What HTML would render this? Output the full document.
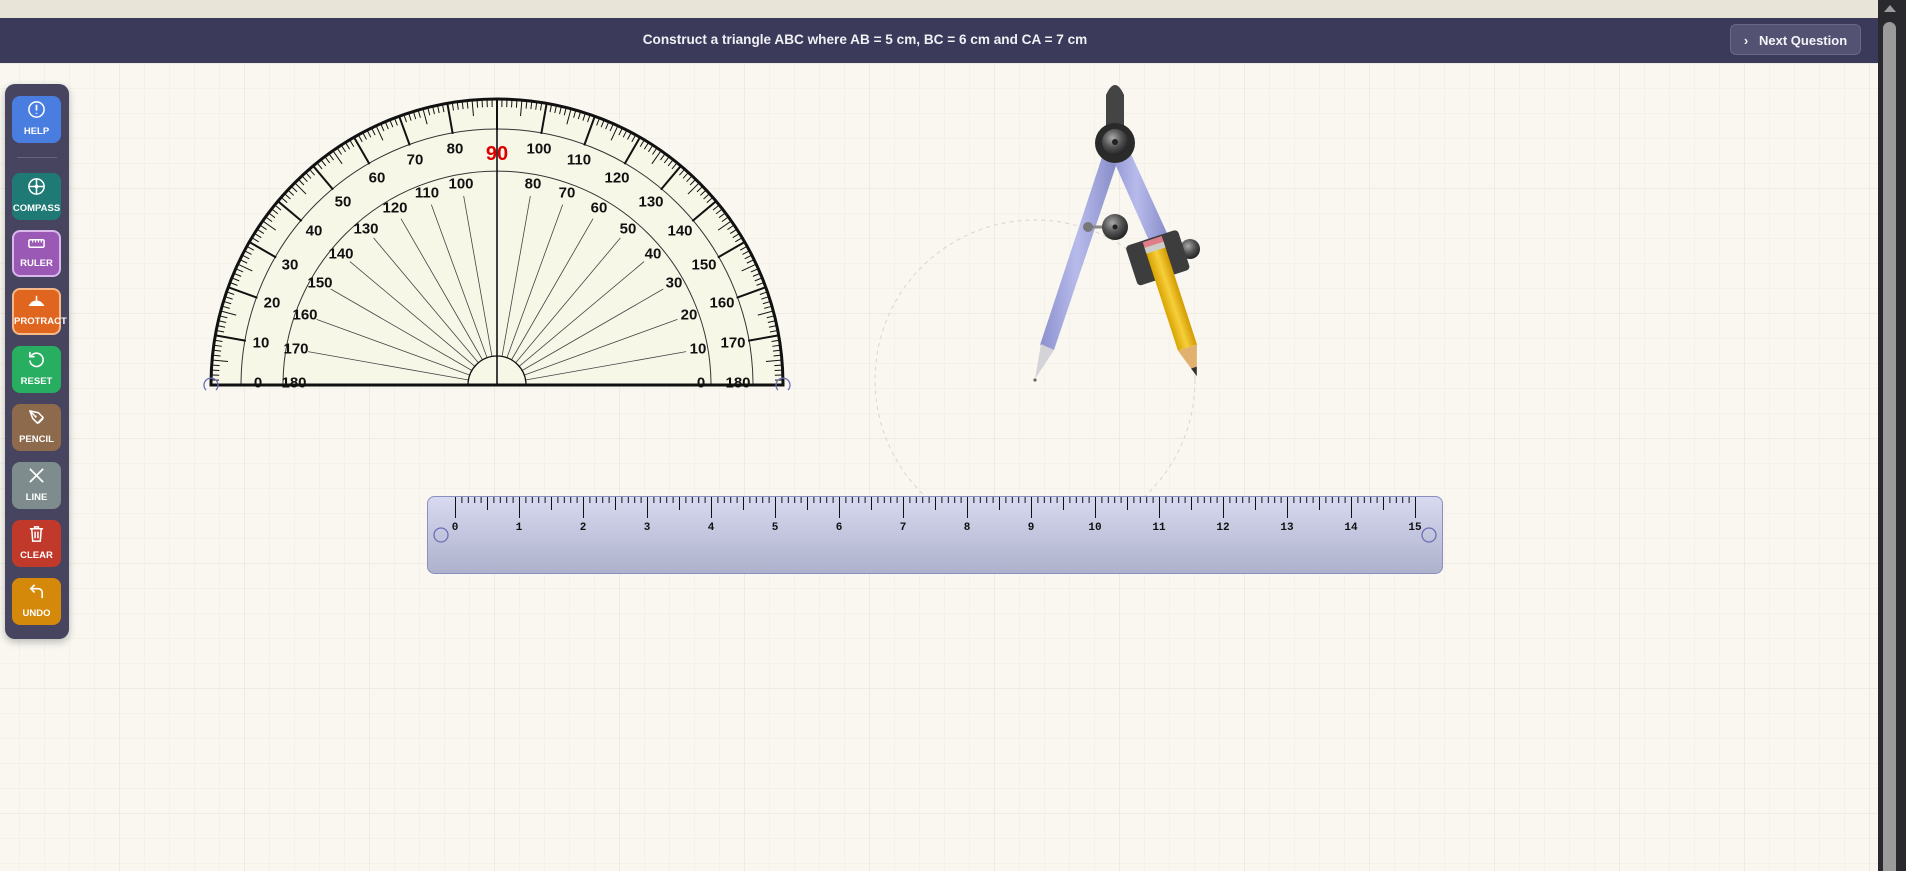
<!DOCTYPE html>
<html><head><meta charset="utf-8">
<style>
html,body{margin:0;padding:0;width:1906px;height:871px;overflow:hidden;font-family:"Liberation Sans",sans-serif;}
body{position:relative;background-color:#f9f7f0;
background-image:linear-gradient(#eeebe2 1px,transparent 1px),linear-gradient(90deg,#eeebe2 1px,transparent 1px),linear-gradient(#f3f1e9 1px,transparent 1px),linear-gradient(90deg,#f3f1e9 1px,transparent 1px);
background-size:125px 125px,125px 125px,25px 25px,25px 25px;background-position:-6px 63px,-6px 63px,-6px 63px,-6px 63px;}
.top{position:absolute;left:0;top:0;width:1878px;height:18px;background:#e8e4d8}
.hdr{position:absolute;left:0;top:18px;width:1878px;height:45px;background:#3b3a5a;color:#f0f0f5;font-weight:bold;font-size:13.6px;}
.hdr .t{position:absolute;left:0;width:1730px;text-align:center;top:14px;padding-left:0}
.btnq{position:absolute;left:1730px;top:6px;width:131px;height:31px;border:1px solid #6a6888;border-radius:6px;background:#545272;color:#f4f4f8;font-size:13px;line-height:31px;text-align:center;box-sizing:border-box}
.sb{position:absolute;left:1878px;top:0;width:28px;height:871px;background:#2a2a2e}
.sb .th{position:absolute;left:5px;top:22px;width:13px;height:860px;background:#9b9b9b;border-radius:7px}
.sb .ar{position:absolute;left:6px;top:5px;width:0;height:0;border-left:6px solid transparent;border-right:6px solid transparent;border-bottom:7px solid #9b9b9b}
.tb{position:absolute;left:5px;top:84px;width:64px;height:555px;background:#46445f;border-radius:10px;box-shadow:0 3px 8px rgba(0,0,0,.25)}
.b{position:absolute;left:7px;width:49px;height:47px;border-radius:8px;color:#fff;font-size:9.5px;font-weight:bold;text-align:center;box-sizing:border-box}
.b span{position:absolute;left:0;right:0;bottom:6px}
.b svg{position:absolute;left:15px;top:4px}
.div{position:absolute;left:12px;top:73px;width:40px;height:1px;background:#66647e}
</style></head><body>
<div class="top"></div>
<div class="hdr"><div class="t">Construct a triangle ABC where AB = 5 cm, BC = 6 cm and CA = 7 cm</div>
<div class="btnq">›&nbsp;&nbsp; Next Question</div></div>
<div class="sb"><div class="ar"></div><div class="th"></div></div>

<div class="tb">
 <div class="b" style="top:12px;background:#4a7de0"><svg width="19" height="19" viewBox="0 0 20 20"><circle cx="10" cy="10" r="8" fill="none" stroke="#fff" stroke-width="1.6"/><path d="M10 5v6M10 13.5v1" stroke="#fff" stroke-width="1.8"/></svg><span>HELP</span></div>
 <div class="div"></div>
 <div class="b" style="top:89px;background:#1f7a76"><svg width="19" height="19" viewBox="0 0 20 20"><circle cx="10" cy="10" r="8" fill="none" stroke="#fff" stroke-width="1.6"/><path d="M10 2v16M2 10h16" stroke="#fff" stroke-width="1.6"/><circle cx="10" cy="10" r="2" fill="#fff"/></svg><span>COMPASS</span></div>
 <div class="b" style="top:146px;background:#9b59b6;border:2px solid #d9b7ea"><svg width="19" height="19" viewBox="0 0 20 20" style="left:13px;top:2px"><rect x="2" y="6" width="16" height="8" rx="1.5" fill="none" stroke="#fff" stroke-width="1.6"/><path d="M6 6v3M9 6v3M12 6v3M15 6v3" stroke="#fff" stroke-width="1.2"/></svg><span>RULER</span></div>
 <div class="b" style="top:204px;background:#e0651e;border:2px solid #f5b889"><svg width="19" height="19" viewBox="0 0 20 20" style="left:13px;top:2px"><path d="M3 14a7 5 0 0 1 14 0z" fill="#fff"/><path d="M10 4v8M2 14h16" stroke="#fff" stroke-width="1.6"/></svg><span>PROTRACT</span></div>
 <div class="b" style="top:262px;background:#27ae60"><svg width="19" height="19" viewBox="0 0 20 20"><path d="M4.5 6A7 7 0 1 1 3 11" fill="none" stroke="#fff" stroke-width="1.7"/><path d="M3 2v5h5" fill="none" stroke="#fff" stroke-width="1.7"/></svg><span>RESET</span></div>
 <div class="b" style="top:320px;background:#8e6a4c"><svg width="19" height="19" viewBox="0 0 20 20"><path d="M3 3l9 2 5 5-6 6-5-5zM3 3l5 5M12 16l5-5" fill="none" stroke="#fff" stroke-width="1.6" stroke-linejoin="round"/><circle cx="9" cy="9" r="1.3" fill="#fff"/></svg><span>PENCIL</span></div>
 <div class="b" style="top:378px;background:#7f8c8d"><svg width="19" height="19" viewBox="0 0 20 20"><path d="M3 3l14 14M17 3L3 17" stroke="#fff" stroke-width="1.8"/></svg><span>LINE</span></div>
 <div class="b" style="top:436px;background:#c0392b"><svg width="19" height="19" viewBox="0 0 20 20"><path d="M3 5h14M8 5V3h4v2M5 5l1 13h8l1-13M8.5 8v7M11.5 8v7" fill="none" stroke="#fff" stroke-width="1.6"/></svg><span>CLEAR</span></div>
 <div class="b" style="top:494px;background:#d4890b"><svg width="19" height="19" viewBox="0 0 20 20"><path d="M8 3L4 7l4 4M4 7h8a4 4 0 0 1 4 4v6" fill="none" stroke="#fff" stroke-width="1.7"/></svg><span>UNDO</span></div>
</div>

<svg width="1906" height="871" style="position:absolute;left:0;top:0" font-family="Liberation Sans,sans-serif">
 <g transform="translate(497,385)">
  <path d="M-286 0A286 286 0 0 1 286 0Z" fill="#f7f7e8" stroke="#111" stroke-width="3"/>
  <path d="M-256 0A256 256 0 0 1 256 0" fill="none" stroke="#333" stroke-width="1"/>
  <path d="M-214 0A214 214 0 0 1 214 0" fill="none" stroke="#333" stroke-width="1"/>
  <g id="pticks" stroke="#111"></g>
  <g id="prays" stroke="#444" stroke-width="0.8"></g>
  <path d="M-29 0A29 29 0 0 1 29 0" fill="#f7f7e8" stroke="#111" stroke-width="1.3"/>
  <line x1="0" y1="0" x2="0" y2="-286" stroke="#111" stroke-width="1.6"/>
  <line x1="-286" y1="0" x2="286" y2="0" stroke="#111" stroke-width="3"/>
  <g font-size="15" font-weight="bold" fill="#111" text-anchor="middle" dominant-baseline="central">
   <text x="-239" y="-2">0</text><text x="-236" y="-42">10</text><text x="-225" y="-82">20</text><text x="-207" y="-120">30</text><text x="-183" y="-154">40</text><text x="-154" y="-183">50</text><text x="-120" y="-207">60</text><text x="-82" y="-225">70</text><text x="-42" y="-236">80</text>
   <text x="42" y="-236">100</text><text x="82" y="-225">110</text><text x="120" y="-207">120</text><text x="154" y="-183">130</text><text x="183" y="-154">140</text><text x="207" y="-120">150</text><text x="225" y="-82">160</text><text x="236" y="-42">170</text><text x="204" y="-2">0</text><text x="241" y="-2">180</text>
   <text x="-203" y="-2">180</text><text x="-201" y="-36">170</text><text x="-192" y="-70">160</text><text x="-177" y="-102">150</text><text x="-156" y="-131">140</text><text x="-131" y="-156">130</text><text x="-102" y="-177">120</text><text x="-70" y="-192">110</text><text x="-36" y="-201">100</text>
   <text x="36" y="-201">80</text><text x="70" y="-192">70</text><text x="102" y="-177">60</text><text x="131" y="-156">50</text><text x="156" y="-131">40</text><text x="177" y="-102">30</text><text x="192" y="-70">20</text><text x="201" y="-36">10</text>
   <text x="0" y="-231" fill="#d00" font-size="20">90</text>
  </g>
  <g fill="none" stroke="#6b6fb5" stroke-width="1.3"><path d="M-291 5a7 7 0 1 1 10 0"/><path d="M281 5a7 7 0 1 1 10 0"/></g>
 </g>
 <circle cx="1035" cy="380" r="160" fill="none" stroke="#d8d6d0" stroke-width="1" stroke-dasharray="4 4"/>
 <defs>
  <linearGradient id="rg" x1="0" y1="0" x2="0" y2="1"><stop offset="0" stop-color="#d7daf0"/><stop offset="1" stop-color="#aeb1cb"/></linearGradient>
  <linearGradient id="leg" x1="0" y1="0" x2="1" y2="0"><stop offset="0" stop-color="#8b90cf"/><stop offset=".45" stop-color="#b7bbeb"/><stop offset="1" stop-color="#8086c4"/></linearGradient>
  <linearGradient id="pen" x1="0" y1="0" x2="1" y2="0"><stop offset="0" stop-color="#d9a400"/><stop offset=".5" stop-color="#f6cf3c"/><stop offset="1" stop-color="#d39a00"/></linearGradient>
  <radialGradient id="hub" cx=".4" cy=".35" r=".7"><stop offset="0" stop-color="#aaa"/><stop offset=".5" stop-color="#555"/><stop offset="1" stop-color="#1e1e1e"/></radialGradient>
 </defs>
 <rect x="427.5" y="496.5" width="1015" height="77" rx="7" fill="url(#rg)" stroke="#8a8fc0"/>
 <g id="rticks" stroke="#111" stroke-width="1"></g>
 <g font-family="Liberation Mono,monospace" font-size="11" font-weight="bold" fill="#111" text-anchor="middle">
  <text x="455" y="530">0</text><text x="519" y="530">1</text><text x="583" y="530">2</text><text x="647" y="530">3</text><text x="711" y="530">4</text><text x="775" y="530">5</text><text x="839" y="530">6</text><text x="903" y="530">7</text><text x="967" y="530">8</text><text x="1031" y="530">9</text><text x="1095" y="530">10</text><text x="1159" y="530">11</text><text x="1223" y="530">12</text><text x="1287" y="530">13</text><text x="1351" y="530">14</text><text x="1415" y="530">15</text>
 </g>
 <circle cx="441" cy="535" r="7" fill="none" stroke="#6b6fb5" stroke-width="1.3"/>
 <circle cx="1429" cy="535" r="7" fill="none" stroke="#6b6fb5" stroke-width="1.3"/>
 <path d="M1106 145 L1040 345 L1054 350 L1122 148Z" fill="url(#leg)"/>
 <path d="M1041 344 L1035 379 L1054 350Z" fill="#d4d4d8"/>
 <circle cx="1035" cy="380" r="1.6" fill="#666"/>
 <path d="M1108 148 L1154 252 L1172 244 L1126 143Z" fill="url(#leg)"/>
 <path d="M1106 145 L1106 95 Q1115 75 1124 95 L1124 145Z" fill="#444"/>
 <line x1="1090" y1="227" x2="1106" y2="227" stroke="#888" stroke-width="3"/>
 <circle cx="1088" cy="227" r="5" fill="#777"/>
 <circle cx="1115" cy="227" r="13" fill="url(#hub)"/>
 <circle cx="1115" cy="227" r="2.5" fill="#222"/>
 <circle cx="1115" cy="143" r="20" fill="#2a2a2a"/>
 <circle cx="1115" cy="142" r="13" fill="url(#hub)"/>
 <circle cx="1115" cy="142" r="3" fill="#222"/>
 <line x1="1180" y1="251" x2="1190" y2="249" stroke="#999" stroke-width="4"/>
 <circle cx="1190" cy="249" r="10" fill="url(#hub)"/>
 <g transform="rotate(-18 1157 257)">
  <rect x="1130" y="237" width="55" height="42" rx="4" fill="#3d3d3d"/>
 </g>
 <g transform="rotate(-18 1172 300)">
  <rect x="1162" y="240" width="20" height="110" fill="url(#pen)"/>
  <rect x="1162" y="236" width="20" height="6" fill="#e07d8a"/>
  <rect x="1162" y="242" width="20" height="6" fill="#ccc"/>
  <path d="M1162 350 L1182 350 L1172 380Z" fill="#e1b170"/>
  <path d="M1169 371 L1175 371 L1172 380Z" fill="#333"/>
 </g>
</svg>
<script>
(function(){
var ns="http://www.w3.org/2000/svg";
var g=document.getElementById("pticks");
for(var d=0;d<=180;d++){var a=d*Math.PI/180,l=d%10==0?30:(d%5==0?15:7),w=d%10==0?2:1,r1=285,r2=285-l;
var e=document.createElementNS(ns,"line");e.setAttribute("x1",-r1*Math.cos(a));e.setAttribute("y1",-r1*Math.sin(a));e.setAttribute("x2",-r2*Math.cos(a));e.setAttribute("y2",-r2*Math.sin(a));e.setAttribute("stroke-width",w);g.appendChild(e);}
var p=document.getElementById("prays");
for(var d=10;d<180;d+=10){if(d==90)continue;var a=d*Math.PI/180;
var e=document.createElementNS(ns,"line");e.setAttribute("x1",-29*Math.cos(a));e.setAttribute("y1",-29*Math.sin(a));e.setAttribute("x2",-192*Math.cos(a));e.setAttribute("y2",-192*Math.sin(a));p.appendChild(e);}
var r=document.getElementById("rticks");
for(var i=0;i<=150;i++){var x=455+i*6.4+0.5,l=i%10==0?21:(i%5==0?13:6);
var e=document.createElementNS(ns,"line");e.setAttribute("x1",x);e.setAttribute("x2",x);e.setAttribute("y1",497);e.setAttribute("y2",497+l);r.appendChild(e);}
})();
</script>
</body></html>
